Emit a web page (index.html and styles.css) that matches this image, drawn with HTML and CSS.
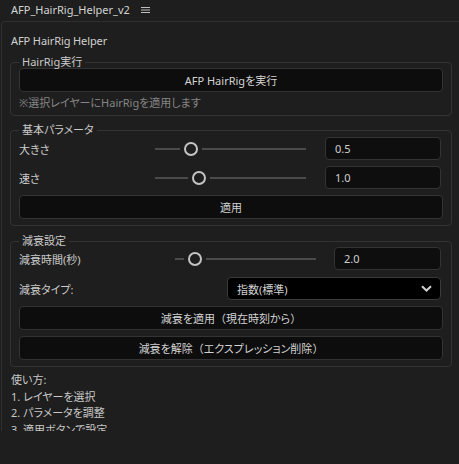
FILE: index.html
```html
<!DOCTYPE html>
<html lang="ja">
<head>
<meta charset="utf-8">
<title>AFP_HairRig_Helper_v2</title>
<link rel="stylesheet" href="styles.css">
</head>
<body>
<div class="titlebar">
  <span class="title">AFP_HairRig_Helper_v2</span>
  <svg class="menu" width="9" height="8" viewBox="0 0 9 8"><path d="M0 1.5H9M0 4H9M0 6.5H9" stroke="#bdbdbd" stroke-width="1"/></svg>
</div>
<div class="panel">
  <div class="heading">AFP HairRig Helper</div>

  <fieldset class="group g1">
    <legend>HairRig実行</legend>
    <button class="btn">AFP HairRigを実行</button>
    <div class="note">※選択レイヤーにHairRigを適用します</div>
  </fieldset>

  <fieldset class="group g2">
    <legend>基本パラメータ</legend>
    <div class="row prow">
      <span class="label">大きさ</span>
      <div class="slider"><div class="track"></div><div class="thumb" style="left:29px"></div></div>
      <div class="field">0.5</div>
    </div>
    <div class="row prow">
      <span class="label">速さ</span>
      <div class="slider"><div class="track"></div><div class="thumb" style="left:37px"></div></div>
      <div class="field">1.0</div>
    </div>
    <button class="btn">適用</button>
  </fieldset>

  <fieldset class="group g3">
    <legend>減衰設定</legend>
    <div class="row drow">
      <span class="label">減衰時間(秒)</span>
      <div class="slider"><div class="track"></div><div class="thumb" style="left:13px"></div></div>
      <div class="field">2.0</div>
    </div>
    <div class="row trow">
      <span class="label">減衰タイプ:</span>
      <div class="select">
        <span>指数(標準)</span>
        <svg class="chev" width="11" height="7" viewBox="0 0 11 7"><path d="M1 1.2L5.5 5.5L10 1.2" fill="none" stroke="#d0d0d0" stroke-width="2"/></svg>
      </div>
    </div>
    <button class="btn">減衰を適用<span class="fw">（</span>現在時刻から<span class="fw">）</span></button>
    <button class="btn">減衰を解除<span class="fw">（</span>エクスプレッション削除<span class="fw">）</span></button>
  </fieldset>

  <div class="usage">
    <div>使い方:</div>
    <div>1. レイヤーを選択</div>
    <div>2. パラメータを調整</div>
    <div>3. 適用ボタンで設定</div>
  </div>
</div>
</body>
</html>
```
FILE: styles.css
```css
* { box-sizing: border-box; }

html, body {
  margin: 0;
  background: #1e1e1e;
}

body {
  font-family: "Noto Sans", "Noto Sans CJK JP", sans-serif;
  font-size: 11px;
  color: #cdcdcd;
  font-feature-settings: "palt";
  width: 459px;
  height: 464px;
  overflow: hidden;
}

.titlebar {
  height: 21px;
  display: flex;
  align-items: center;
  padding: 0 0 2px 11px;
  gap: 11px;
}

.title {
  font-size: 11px;
  color: #d4d4d4;
  line-height: 14px;
}

.menu { display: block; }

.panel {
  margin-left: 1px;
  height: 410px;
  overflow: hidden;
  border-top: 1px solid #2f2f2f;
  border-left: 1px solid #2f2f2f;
  border-top-left-radius: 4px;
  padding: 0 7px 0 8px;
}

.heading {
  padding: 11px 0 0 1px;
  line-height: 16px;
  color: #d0d0d0;
  letter-spacing: -0.1px;
}

.group {
  margin: 0;
  border: 1px solid #333;
  border-radius: 4px;
  padding: 0 8px 6px;
  min-width: 0;
}

.group legend {
  padding: 0 3px;
  line-height: 12px;
  color: #c9c9c9;
}

.g1 { margin-top: 7px; padding-bottom: 4px; }
.g2 { margin-top: 8px; }
.g3 { margin-top: 9px; }

.btn {
  display: block;
  width: 100%;
  height: 24px;
  margin: 0;
  padding: 0;
  background: #0d0d0d;
  border: 1px solid #333;
  border-radius: 4px;
  font: inherit;
  color: #d2d2d2;
  text-align: center;
}

.fw { font-feature-settings: normal; }

.note {
  margin-top: 3px;
  line-height: 16px;
  color: #858585;
}

.row {
  display: flex;
  align-items: center;
  height: 23px;
}

.g2 .row:first-of-type { margin-top: 1px; }
.g2 .row + .row { margin-top: 6px; }
.g2 .btn { margin-top: 6px; }

.g3 .trow { margin-top: 7px; }
.g3 .btn { margin-top: 6px; }

.label { flex: none; color: #cbcbcb; }
.prow .label { width: 136px; }
.drow .label { width: 156px; }
.trow .label { width: 208px; }

.slider {
  position: relative;
  flex: none;
  height: 23px;
}
.prow .slider { width: 151px; }
.drow .slider { width: 141px; }

.track {
  position: absolute;
  left: 0;
  right: 0;
  top: 11px;
  height: 2px;
  background: #4b4b4b;
}

.thumb {
  position: absolute;
  top: 5px;
  width: 14px;
  height: 14px;
  border: 2px solid #c4c4c4;
  border-radius: 50%;
  background: #1e1e1e;
  box-shadow: 0 0 0 4px #1e1e1e;
}

.field {
  flex: none;
  height: 23px;
  line-height: 21px;
  padding-left: 9px;
  background: #0e0e0e;
  border: 1px solid #333;
  border-radius: 4px;
  color: #cfcfcf;
}
.prow .field { width: 116px; margin-left: 19px; }
.drow .field { width: 107px; margin-left: 18px; }

.select {
  flex: none;
  width: 214px;
  height: 23px;
  display: flex;
  align-items: center;
  justify-content: space-between;
  padding: 0 8px 0 9px;
  background: #000;
  border: 1px solid #3a3a3a;
  border-radius: 4px;
  color: #d0d0d0;
}

.chev { display: block; }

.usage {
  margin-top: 5px;
  padding-left: 1px;
  line-height: 16.5px;
  color: #c8c8c8;
}
```
